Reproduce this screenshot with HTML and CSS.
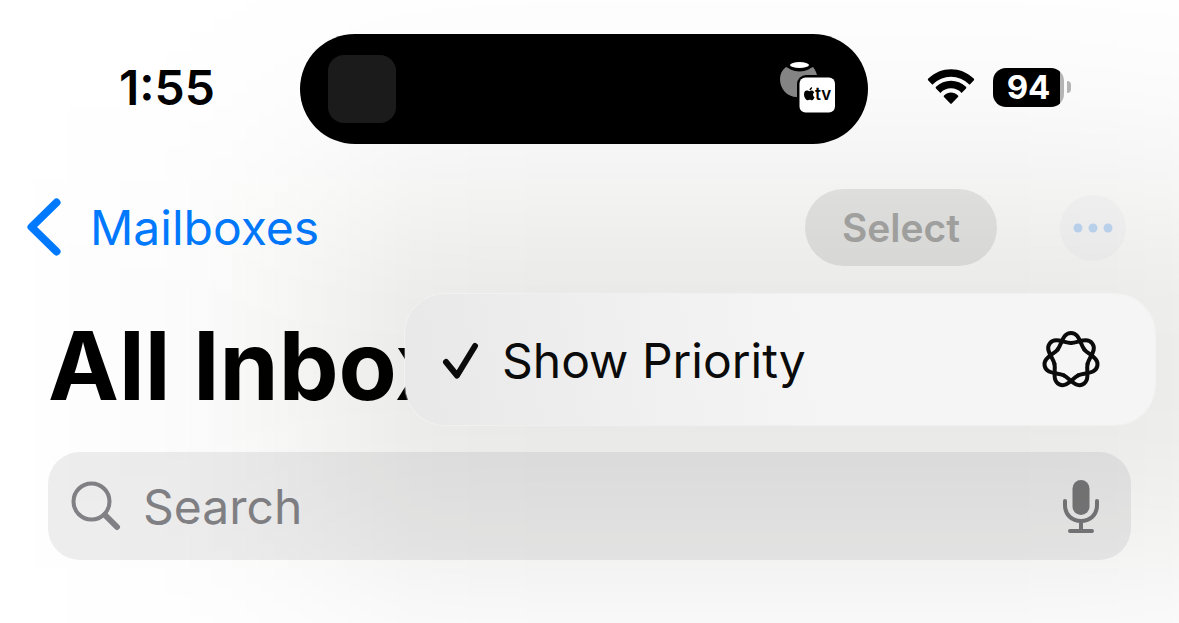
FILE: index.html
```html
<!DOCTYPE html>
<html lang="en">
<head>
<meta charset="utf-8">
<meta name="viewport" content="width=device-width, initial-scale=1">
<title>All Inboxes</title>
<link rel="stylesheet" href="styles.css">
</head>
<body>
<div class="screen">
  <div class="status-bar">
    <time class="clock">1:55</time>
    <div class="island">
      <span class="artwork"></span>
      <svg class="output" viewBox="0 0 58 52" width="58" height="52" role="img" aria-label="HomePod and Apple TV">
        <path d="M7 6 C3 9 1 13 1 18 C1 28 8 36 18 36 H24 L38 14 C37 11 36 8 34 6 C27 10 14 10 7 6Z" fill="#848484"/>
        <ellipse cx="20.500" cy="4.500" rx="12" ry="6" fill="#000"/>
        <ellipse cx="20.500" cy="4" rx="9.500" ry="3" fill="#fff"/>
        <rect x="18" y="14" width="41" height="40" rx="9" fill="#000"/>
        <rect x="20.500" y="16.500" width="35.500" height="35" rx="6" fill="#fff"/>
        <path d="M30.600 30.200 C29.500 30.200 28.800 29.600 27.800 29.600 C26.200 29.600 25 31 25 33.300 C25 36.200 26.900 39.200 28.500 39.200 C29.300 39.200 29.700 38.700 30.700 38.700 C31.700 38.700 32 39.200 32.900 39.200 C34 39.200 35 37.700 35.500 36.300 C33.600 35.400 33.500 32.300 35.200 31.200 C34.500 30.100 33.400 29.600 32.600 29.600 C31.700 29.600 31.200 30.200 30.600 30.200Z M30.500 29.200 C30.400 27.700 31.600 26.300 33.100 26 C33.300 27.600 32 29.200 30.500 29.200Z" fill="#000"/>
        <text class="tv" x="36" y="39">tv</text>
      </svg>
    </div>
    <div class="indicators">
      <svg class="wifi" viewBox="0 0 48 36" width="48" height="36" role="img" aria-label="Wi-Fi">
        <path d="M1.300 9.500 C14 -3 34 -3 46.700 9.500 Q47.600 10.500 46.700 11.500 L42.600 15.700 C32 5 16 5 5.400 15.700 L1.300 11.500 Q0.400 10.500 1.300 9.500Z"/>
        <path d="M9 17.800 C17.200 9.600 30.800 9.600 39 17.800 Q39.800 18.700 39 19.500 L34.600 23.900 C29 17.800 19 17.800 13.400 23.900 L9 19.500 Q8.200 18.700 9 17.800Z"/>
        <path d="M17 26.400 C21 22.500 27 22.500 31 26.400 Q31.700 27.200 31 28 L24.700 34.600 Q24 35.200 23.300 34.600 L17 28 Q16.300 27.200 17 26.400Z"/>
      </svg>
      <span class="battery"><span class="level">94</span></span>
    </div>
  </div>

  <nav class="nav-bar">
    <a class="back" href="#mailboxes">
      <svg viewBox="0 0 34 60" width="34" height="60" aria-hidden="true"><path d="M29.500 4.500 L4.500 29 L29.500 53.500"/></svg>
      <span>Mailboxes</span>
    </a>
    <div class="actions">
      <button class="select" type="button">Select</button>
      <button class="more" type="button" aria-label="More" aria-expanded="true">
        <svg viewBox="0 0 42 10" width="42" height="10" aria-hidden="true"><circle cx="6" cy="5" r="4.500"/><circle cx="21" cy="5" r="4.500"/><circle cx="36" cy="5" r="4.500"/></svg>
      </button>
    </div>
    <div class="menu" role="menu">
      <button class="menu-item" type="button" role="menuitemcheckbox" aria-checked="true">
        <svg class="check" viewBox="0 0 38 38" width="38" height="38" aria-hidden="true"><path d="M4 20 L15 33.500 L33 4"/></svg>
        <span class="menu-label">Show Priority</span>
        <svg class="knot" viewBox="-30 -29 60 60" width="60" height="60" aria-hidden="true">
          <defs><path id="petal" d="M-13.290 -10.600 C-8.930 -16.070 -8.500 -27 0 -27 S8.930 -16.070 13.290 -10.600"/></defs>
          <use href="#petal"/>
          <use href="#petal" transform="rotate(51.429)"/>
          <use href="#petal" transform="rotate(102.857)"/>
          <use href="#petal" transform="rotate(154.286)"/>
          <use href="#petal" transform="rotate(205.714)"/>
          <use href="#petal" transform="rotate(257.143)"/>
          <use href="#petal" transform="rotate(308.571)"/>
        </svg>
      </button>
    </div>
  </nav>

  <main class="content">
    <h1 class="title">All Inboxes</h1>
    <form class="search" role="search">
      <svg viewBox="0 0 50 50" width="50" height="50" aria-hidden="true"><circle cx="20.500" cy="20.500" r="18"/><path class="handle" d="M34 34 L46 46"/></svg>
      <input type="search" placeholder="Search" aria-label="Search">
      <button class="mic" type="button" aria-label="Dictate">
        <svg viewBox="0 0 38 54" width="38" height="54" aria-hidden="true"><rect x="10.500" y="0" width="17" height="35" rx="8.500"/><path d="M3 21 V25 C3 35 10 41 19 41 C28 41 35 35 35 25 V21 M19 41 V51 M8 51 H30"/></svg>
      </button>
    </form>
  </main>
</div>
</body>
</html>
```

FILE: styles.css
```css
* {
  box-sizing: border-box;
}

body {
  margin: 0;
  background: #fff;
  color: #000;
  font-family: Inter, "Liberation Sans", sans-serif;
}

button {
  margin: 0;
  padding: 0;
  border: 0;
  background: none;
  color: inherit;
  font: inherit;
}

.screen {
  min-height: 100vh;
  overflow: hidden;
  padding-top: 34px;
}

.status-bar {
  position: relative;
  z-index: 3;
  display: grid;
  grid-template-columns: 1fr 568px 1fr;
  align-items: center;
  padding-right: 11px;
}

.clock {
  padding: 0 0 2px 119px;
  font-size: 48px;
  font-weight: 600;
  line-height: 56px;
}

.island {
  display: flex;
  align-items: center;
  justify-content: space-between;
  height: 110px;
  padding: 0 31px 0 28px;
  border-radius: 55px;
  background: #000;
}

.artwork {
  width: 68px;
  height: 68px;
  border-radius: 16px;
  background: #1b1b1b;
}

.output {
  margin-bottom: 4px;
}

.tv {
  font-size: 17px;
  font-weight: 600;
}

.indicators {
  display: flex;
  align-items: center;
  justify-content: flex-end;
  gap: 18px;
  padding: 0 97px 4px 0;
}

.battery {
  display: flex;
  align-items: center;
  gap: 3px;
}

.battery::after {
  content: "";
  width: 4px;
  height: 12px;
  border-radius: 0 6px 6px 0;
  background: #b4b4b4;
}

.level {
  width: 71px;
  border-radius: 13px;
  background: linear-gradient(to right, #000 67px, #b4b4b4 67px);
  color: #fff;
  font-size: 33px;
  font-weight: 700;
  line-height: 39px;
  text-align: center;
}

.nav-bar {
  position: relative;
  z-index: 2;
  display: flex;
  align-items: center;
  justify-content: space-between;
  margin-top: 45px;
  padding: 0 53px 0 27px;
}

.back {
  display: flex;
  align-items: center;
  gap: 29px;
  color: #007aff;
  font-size: 48px;
  line-height: 60px;
  text-decoration: none;
}

.back path {
  fill: none;
  stroke: currentColor;
  stroke-width: 8;
  stroke-linecap: round;
  stroke-linejoin: round;
}

.actions {
  display: flex;
  align-items: center;
  gap: 63px;
}

.select {
  width: 192px;
  height: 77px;
  border-radius: 39px;
  background: #e9e9e9;
  color: #a9a9a9;
  font-size: 39px;
  font-weight: 600;
}

.more {
  display: grid;
  place-items: center;
  width: 66px;
  height: 66px;
  border-radius: 50%;
  background: #fafafc;
}

.more circle {
  fill: #c3dcf8;
}

.menu {
  position: absolute;
  top: 105px;
  right: 24px;
  z-index: 1;
  width: 750px;
}

/* Wide soft shadow: horizontal falloff in the fill, vertical falloff in the mask. */
.menu::before {
  content: "";
  position: absolute;
  z-index: -1;
  inset: -300px -100px -260px -400px;
  pointer-events: none;
  background: linear-gradient(to right,
    rgba(12, 12, 0, 0) 10px,
    rgba(12, 12, 0, 0.006) 80px,
    rgba(12, 12, 0, 0.012) 150px,
    rgba(12, 12, 0, 0.023) 220px,
    rgba(12, 12, 0, 0.042) 290px,
    rgba(12, 12, 0, 0.063) 350px,
    rgba(12, 12, 0, 0.081) 410px,
    rgba(12, 12, 0, 0.091) 480px,
    rgba(12, 12, 0, 0.094) 560px,
    rgba(12, 12, 0, 0.094) 1000px,
    rgba(12, 12, 0, 0.088) 1100px,
    rgba(12, 12, 0, 0.074) 1180px);
  mask-image: linear-gradient(to bottom,
    rgba(0, 0, 0, 0.06) 6px,
    rgba(0, 0, 0, 0.12) 56px,
    rgba(0, 0, 0, 0.23) 106px,
    rgba(0, 0, 0, 0.39) 156px,
    rgba(0, 0, 0, 0.58) 206px,
    rgba(0, 0, 0, 0.78) 256px,
    rgba(0, 0, 0, 0.92) 300px,
    #000 360px,
    #000 400px,
    rgba(0, 0, 0, 0.92) 450px,
    rgba(0, 0, 0, 0.78) 500px,
    rgba(0, 0, 0, 0.58) 556px,
    rgba(0, 0, 0, 0.36) 606px,
    rgba(0, 0, 0, 0.18) 656px);
}

.menu-item {
  display: flex;
  align-items: center;
  width: 100%;
  height: 131px;
  padding: 2px 54px 0 37px;
  border-radius: 40px;
  background: linear-gradient(80deg, #e9e9e9 4%, #f0f0f0 32%, #f5f5f5 55%, #f5f5f5);
  box-shadow: 0 0 0 1px rgba(255, 255, 255, 0.3);
  color: #0b0b0b;
  font-size: 48px;
  line-height: 60px;
}

.check {
  fill: none;
  stroke: currentColor;
  stroke-width: 6;
  stroke-linecap: round;
  stroke-linejoin: round;
}

.menu-label {
  flex: 1;
  padding-left: 22px;
  text-align: left;
}

.knot {
  fill: none;
  stroke: currentColor;
  stroke-width: 4;
  stroke-linecap: round;
}

.content {
  padding: 40px 48px;
}

.title {
  margin: 0;
  font-size: 95px;
  font-weight: 700;
  line-height: 120px;
  white-space: nowrap;
}

.search {
  display: flex;
  align-items: center;
  gap: 22px;
  height: 108px;
  margin-top: 26px;
  padding: 0 31px 0 23px;
  border-radius: 32px;
  background: #eeeeef;
  color: #828286;
}

.search circle,
.search path {
  fill: none;
  stroke: currentColor;
  stroke-width: 4;
  stroke-linecap: round;
}

.search .handle {
  stroke-width: 6;
}

.search rect {
  fill: currentColor;
}

.search input {
  flex: 1;
  min-width: 0;
  padding: 2px 0 0;
  border: 0;
  outline: 0;
  background: none;
  color: inherit;
  font: inherit;
  font-size: 48px;
  line-height: 60px;
}

.search input::placeholder {
  color: inherit;
  opacity: 1;
}

.mic {
  display: flex;
  padding-top: 2px;
  color: #78787b;
}
```
